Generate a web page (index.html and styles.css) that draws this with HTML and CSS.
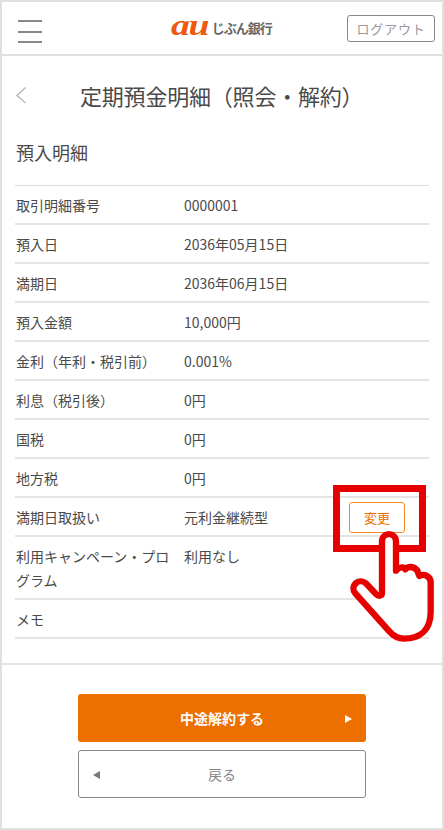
FILE: index.html
```html
<!DOCTYPE html>
<html lang="ja">
<head>
    <meta charset="UTF-8">
    <meta name="viewport" content="width=device-width, initial-scale=1.0">
    <title>定期預金明細</title>
    <link rel="stylesheet" href="styles.css">
</head>
<body>
    <div class="page">
        <header class="header">
            <div class="menu-btn"><span></span><span></span><span></span></div>
            <div class="logo"><span class="logo-au">au</span><span class="logo-name">じぶん銀行</span></div>
            <button class="logout-btn">ログアウト</button>
        </header>

        <div class="title-bar">
            <svg class="back-icon" width="12" height="18" viewBox="0 0 12 18">
                <path d="M10.5 1.5 L2 9.5 L10.5 17" fill="none" stroke="#bbb" stroke-width="1.6"/>
            </svg>
            <h1>定期預金明細（照会・解約）</h1>
        </div>

        <h2 class="section-title">預入明細</h2>

        <div class="detail-list">
            <div class="row"><div class="row-label">取引明細番号</div><div class="row-value">0000001</div></div>
            <div class="row"><div class="row-label">預入日</div><div class="row-value">2036年05月15日</div></div>
            <div class="row"><div class="row-label">満期日</div><div class="row-value">2036年06月15日</div></div>
            <div class="row"><div class="row-label">預入金額</div><div class="row-value">10,000円</div></div>
            <div class="row"><div class="row-label">金利（年利・税引前）</div><div class="row-value">0.001%</div></div>
            <div class="row"><div class="row-label">利息（税引後）</div><div class="row-value">0円</div></div>
            <div class="row"><div class="row-label">国税</div><div class="row-value">0円</div></div>
            <div class="row"><div class="row-label">地方税</div><div class="row-value">0円</div></div>
            <div class="row">
                <div class="row-label">満期日取扱い</div>
                <div class="row-value">元利金継続型</div>
                <button class="change-btn">変更</button>
            </div>
            <div class="row"><div class="row-label">利用キャンペーン・プログラム</div><div class="row-value">利用なし</div></div>
            <div class="row"><div class="row-label">メモ</div><div class="row-value"></div></div>
        </div>

        <div class="actions">
            <button class="btn btn-primary">中途解約する</button>
            <button class="btn btn-back">戻る</button>
        </div>

        <!-- red marker over the change button -->
        <div class="marker"></div>
        <svg class="hand" width="124" height="170" viewBox="0 0 372 510">
            <path d="M186 340 L186 185 C186 155 228 155 228 185 L228 272 C236 262 250 258 256 268 C264 258 282 258 292 272 L298 288 C312 280 332 288 332 308 L332 395 C332 450 300 476 252 476 C232 476 218 466 206 452 L106 340 C88 318 116 292 138 310 L168 342 C176 350 186 348 186 340 Z" fill="#fff" stroke="#e60000" stroke-width="19" stroke-linejoin="round"/>
        </svg>
    </div>
</body>
</html>
```

FILE: styles.css
```css
body {
    font-family: "Noto Sans CJK JP", "Noto Sans", sans-serif;
    margin: 0;
    padding: 0;
    background-color: #fff;
    color: #4a4a4a;
}
button {
    font-family: inherit;
    padding: 0;
    cursor: pointer;
}
.page {
    position: relative;
    box-sizing: border-box;
    width: 444px;
    height: 830px;
    overflow: hidden;
    border: 2px solid #e0e0e0;
}
.header {
    display: flex;
    align-items: center;
    justify-content: space-between;
    height: 52px;
    padding: 0 7px 0 16px;
    border-bottom: 2px solid #e0e0e0;
}
.menu-btn {
    display: flex;
    flex-direction: column;
    justify-content: space-between;
    width: 24px;
    height: 23px;
    margin-top: 7px;
}
.menu-btn span {
    height: 2px;
    background-color: #888;
}
.logo {
    display: flex;
    align-items: center;
    margin-left: 54px;
    line-height: 24px;
}
.logo-au {
    font-family: "Liberation Serif", serif;
    font-size: 29px;
    font-style: italic;
    font-weight: bold;
    letter-spacing: -1px;
    color: #eb5a0f;
    position: relative;
    top: -3px;
    transform: scaleX(1.3);
    transform-origin: left center;
}
.logo-name {
    margin-left: 12px;
    font-size: 13px;
    font-weight: bold;
    letter-spacing: -1px;
    color: #666;
}
.logout-btn {
    width: 88px;
    height: 27px;
    font-size: 13px;
    letter-spacing: 0.8px;
    color: #999;
    background-color: #fff;
    border: 1px solid #888;
    border-radius: 3px;
}
.title-bar {
    display: flex;
    align-items: center;
    height: 78px;
    padding-left: 13px;
}
.back-icon {
    flex-shrink: 0;
    margin-right: 53px;
}
.title-bar h1 {
    margin: 0;
    font-size: 22px;
    font-weight: 400;
    letter-spacing: -0.2px;
    white-space: nowrap;
}
.section-title {
    margin: 0;
    padding: 4px 0 0 14px;
    height: 47px;
    font-size: 18px;
    line-height: 28px;
    font-weight: 400;
}
.detail-list {
    margin: 0 13px;
    border-top: 1px solid #ddd;
}
.row {
    display: grid;
    grid-template-columns: 168px 1fr auto;
    align-items: start;
    padding: 7px 24px 6px 1px;
    border-bottom: 2px solid #e4e4e4;
    font-size: 14px;
    line-height: 24px;
}
.row:last-child .row-value {
    min-height: 24px;
}
.row-label {
    padding-right: 10px;
}
.change-btn {
    width: 56px;
    height: 31px;
    margin-top: -3px;
    margin-bottom: -4px;
    font-size: 13px;
    color: #ec6f00;
    background-color: #fff;
    border: 1px solid #f08a24;
    border-radius: 3px;
}
.actions {
    display: flex;
    flex-direction: column;
    align-items: center;
    gap: 8px;
    margin-top: 24px;
    padding-top: 29px;
    border-top: 2px solid #e4e4e4;
}
.btn {
    position: relative;
    box-sizing: border-box;
    width: 288px;
    height: 48px;
    font-size: 14px;
    border-radius: 3px;
}
.btn-primary {
    font-weight: bold;
    color: #fff;
    background-color: #ec6f00;
    border: none;
}
.btn-primary::after {
    content: "";
    position: absolute;
    right: 14px;
    top: 21px;
    border-left: 7px solid #fff;
    border-top: 4px solid transparent;
    border-bottom: 4px solid transparent;
}
.btn-back {
    color: #888;
    background-color: #fff;
    border: 1px solid #888;
}
.btn-back::before {
    content: "";
    position: absolute;
    left: 14px;
    top: 20px;
    border-right: 7px solid #777;
    border-top: 4px solid transparent;
    border-bottom: 4px solid transparent;
}
.marker {
    position: absolute;
    left: 331px;
    top: 483px;
    box-sizing: border-box;
    width: 93px;
    height: 67px;
    border: 7px solid #e60000;
}
.hand {
    position: absolute;
    left: 318px;
    top: 478px;
}
```
